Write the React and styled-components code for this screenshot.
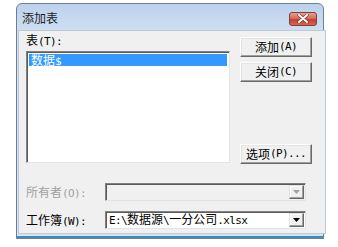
import React from 'react';
import styled, { createGlobalStyle } from 'styled-components';

const Global = createGlobalStyle`
  html, body {
    margin: 0;
    padding: 0;
    background: #ffffff;
  }
  body {
    font-family: "Noto Sans CJK SC", "DejaVu Sans", sans-serif;
    font-size: 12px;
    color: #000;
  }
`;

const Window = styled.div`
  margin: 3px 0 0 16px;
  width: 308px;
  height: 236px;
  box-sizing: border-box;
  border: 1px solid #6d7f94;
  border-radius: 6px 6px 0 0;
  background: linear-gradient(#bcd2ec, #d0e0f2 30px, #d6e4f3);
  display: flex;
  flex-direction: column;
`;

const TitleBar = styled.div`
  height: 26px;
  display: flex;
  align-items: center;
  justify-content: space-between;
  padding: 0 6px 0 5px;
`;

const Title = styled.span`
  font-size: 12px;
  line-height: 14px;
  color: #1e1e1e;
  margin-top: 1px;
`;

const CloseButton = styled.div`
  width: 28px;
  height: 14px;
  box-sizing: border-box;
  border: 1px solid #8c3b30;
  border-radius: 3px;
  background: linear-gradient(#e8a196, #d66b5a 45%, #c4412d 55%, #cf6a55);
  display: flex;
  align-items: center;
  justify-content: center;
  margin-top: 3px;
`;

const Frame = styled.div`
  flex: 1;
  display: flex;
  padding: 0 1px 2px 1px;
  border-bottom: 2px solid #3f8cb5;
`;

const Body = styled.div`
  flex: 1;
  background: #f0f0f0;
  border: 1px solid #b9c9da;
  padding: 2px 13px 0 7px;
  display: flex;
  flex-direction: column;
`;

const Top = styled.div`
  display: flex;
  gap: 10px;
`;

const LeftCol = styled.div`
  display: flex;
  flex-direction: column;
`;

const Label = styled.div`
  line-height: 14px;
  height: 14px;
  color: ${p => (p.$disabled ? '#a0a0a0' : '#000')};
  width: ${p => p.$width || 'auto'};
  flex: none;
`;

const Latin = styled.span`
  font-family: "DejaVu Sans Mono", "Liberation Mono", monospace;
  font-size: 11px;
  letter-spacing: -0.6px;
`;

const ListBox = styled.div`
  margin-top: 4px;
  width: 204px;
  height: 112px;
  box-sizing: border-box;
  background: #fff;
  border: 1px solid;
  border-color: #828282 #e3e3e3 #e3e3e3 #828282;
  box-shadow: inset 1px 1px 0 #5a5a5a;
  padding: 2px 2px 0 2px;
`;

const ListItem = styled.div`
  height: 12px;
  line-height: 12px;
  padding-left: 2px;
  background: ${p => (p.$selected ? '#3399ff' : 'transparent')};
  color: ${p => (p.$selected ? '#fff' : '#000')};
`;

const RightCol = styled.div`
  display: flex;
  flex-direction: column;
  gap: 5px;
  padding-top: 4px;
`;

const Button = styled.div`
  width: 72px;
  height: 20px;
  box-sizing: border-box;
  background: #f0f0f0;
  border: 1px solid;
  border-color: #ffffff #696969 #696969 #ffffff;
  box-shadow: inset -1px -1px 0 #a0a0a0, inset 1px 1px 0 #e3e3e3;
  display: flex;
  align-items: center;
  justify-content: center;
  line-height: 14px;
  margin-top: ${p => p.$push || '0'};
`;

const Row = styled.div`
  display: flex;
  align-items: center;
  margin-top: ${p => p.$gap};
`;

const Combo = styled.div`
  width: 201px;
  height: 18px;
  box-sizing: border-box;
  border: 1px solid;
  border-color: #828282 #e3e3e3 #e3e3e3 #828282;
  box-shadow: inset 1px 1px 0 #5a5a5a;
  background: ${p => (p.$disabled ? '#f0f0f0' : '#fff')};
  display: flex;
  align-items: center;
  justify-content: space-between;
  padding: 1px 1px 1px 3px;
`;

const ComboText = styled.span`
  line-height: 14px;
  white-space: nowrap;
`;

const ArrowButton = styled.div`
  width: 15px;
  height: 14px;
  box-sizing: border-box;
  background: #f0f0f0;
  border: 1px solid;
  border-color: #e3e3e3 #696969 #696969 #e3e3e3;
  box-shadow: inset -1px -1px 0 #a0a0a0, inset 1px 1px 0 #fff;
  display: flex;
  align-items: center;
  justify-content: center;
`;

// split text so the ASCII parts get the narrow mono font
const mixed = text =>
  text.split(/([\x20-\x7e]+)/).filter(Boolean).map((part, i) =>
    /^[\x20-\x7e]+$/.test(part) ? <Latin key={i}>{part}</Latin> : <span key={i}>{part}</span>
  );

const Arrow = ({ color }) => (
  <svg width="7" height="4" viewBox="0 0 7 4">
    <polygon points="0,0 7,0 3.5,4" fill={color} />
  </svg>
);

const CloseIcon = () => (
  <svg width="12" height="9" viewBox="0 0 12 9">
    <path d="M2 1 L10 8 M10 1 L2 8" stroke="#7a2a20" strokeWidth="3.2" strokeLinecap="round" />
    <path d="M2 1 L10 8 M10 1 L2 8" stroke="#ffffff" strokeWidth="2" strokeLinecap="round" />
  </svg>
);

export default function App() {
  return (
    <>
      <Global />
      <Window>
        <TitleBar>
          <Title>添加表</Title>
          <CloseButton>
            <CloseIcon />
          </CloseButton>
        </TitleBar>
        <Frame>
          <Body>
            <Top>
              <LeftCol>
                <Label>{mixed('表(T):')}</Label>
                <ListBox>
                  <ListItem $selected>{mixed('数据$')}</ListItem>
                </ListBox>
              </LeftCol>
              <RightCol>
                <Button>{mixed('添加(A)')}</Button>
                <Button>{mixed('关闭(C)')}</Button>
                <Button $push="57px">{mixed('选项(P)...')}</Button>
              </RightCol>
            </Top>
            <Row $gap="19px">
              <Label $disabled $width="79px">{mixed('所有者(O):')}</Label>
              <Combo $disabled>
                <ComboText />
                <ArrowButton>
                  <Arrow color="#a0a0a0" />
                </ArrowButton>
              </Combo>
            </Row>
            <Row $gap="10px">
              <Label $width="79px">{mixed('工作簿(W):')}</Label>
              <Combo>
                <ComboText>{mixed('E:\\数据源\\一分公司.xlsx')}</ComboText>
                <ArrowButton>
                  <Arrow color="#000" />
                </ArrowButton>
              </Combo>
            </Row>
          </Body>
        </Frame>
      </Window>
    </>
  );
}
